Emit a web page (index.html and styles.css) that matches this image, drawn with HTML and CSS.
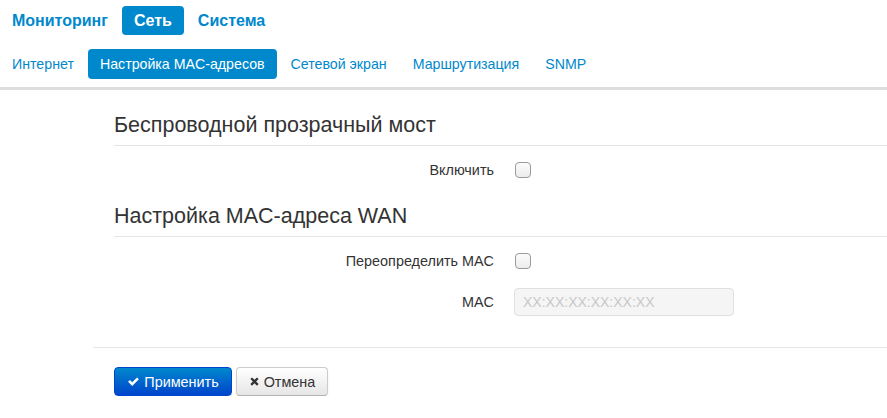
FILE: index.html
```html
<!DOCTYPE html>
<html lang="ru">
<head>
<meta charset="utf-8">
<link rel="stylesheet" href="styles.css">
</head>
<body>
<ul class="nav nav-top">
  <li><a>Мониторинг</a></li>
  <li class="active"><a>Сеть</a></li>
  <li><a>Система</a></li>
</ul>
<ul class="nav nav-sub">
  <li><a>Интернет</a></li>
  <li class="active"><a>Настройка MAC-адресов</a></li>
  <li><a>Сетевой экран</a></li>
  <li><a>Маршрутизация</a></li>
  <li><a>SNMP</a></li>
</ul>
<div class="bar"></div>
<div class="content">
  <div class="inner">
    <h2 class="legend first">Беспроводной прозрачный мост</h2>
    <div class="row row-a">
      <label class="lbl">Включить</label>
      <span class="check"></span>
    </div>
    <h2 class="legend second">Настройка MAC-адреса WAN</h2>
    <div class="row row-b">
      <label class="lbl">Переопределить MAC</label>
      <span class="check"></span>
    </div>
    <div class="row row-c">
      <label class="lbl">MAC</label>
      <input class="field" type="text" placeholder="XX:XX:XX:XX:XX:XX">
    </div>
  </div>
  <div class="actions">
    <button class="btn btn-primary"><svg class="ico" viewBox="0 0 14 14" width="13" height="13"><path d="M1.2 7.4 L3.2 5.4 L5.6 7.8 L10.8 2.6 L12.8 4.6 L5.6 11.8 Z" fill="#fff"/></svg>Применить</button>
    <button class="btn btn-default"><svg class="ico" viewBox="0 0 12 12" width="11" height="11"><path d="M1.5 3.3 L3.3 1.5 L6 4.2 L8.7 1.5 L10.5 3.3 L7.8 6 L10.5 8.7 L8.7 10.5 L6 7.8 L3.3 10.5 L1.5 8.7 L4.2 6 Z" fill="#333"/></svg>Отмена</button>
  </div>
</div>
</body>
</html>
```

FILE: styles.css
```css
* { box-sizing: border-box; }
body {
  margin: 0;
  font-family: "Liberation Sans", Arial, sans-serif;
  font-size: 14px;
  color: #333;
  background: #fff;
}
.nav {
  list-style: none;
  margin: 0;
  padding: 0;
  display: flex;
}
.nav li { margin-right: 2px; }
.nav a {
  display: block;
  padding: 8px 12px;
  line-height: 14px;
  color: #0088cc;
  border-radius: 4px;
}
.nav .active a {
  background: #0088cc;
  color: #fff;
}
.nav-top { margin-top: 6px; }
.nav-top a {
  font-weight: bold;
  font-size: 16px;
  line-height: 13px;
}
.nav-sub { margin-top: 14px; }
.nav-sub a { font-size: 14.2px; }
.bar {
  margin-top: 8px;
  height: 3px;
  background: #dddddd;
}
.content {
  margin-left: 93px;
}
.inner { padding-left: 21px; }
.legend {
  margin: 0;
  font-weight: normal;
  font-size: 21.5px;
  line-height: 40px;
  color: #333;
  border-bottom: 1px solid #e5e5e5;
}
.legend.first { margin-top: 15px; }
.legend.second { margin-top: 16px; }
.row {
  display: grid;
  grid-template-columns: 380px auto;
  column-gap: 20px;
  align-items: center;
  justify-content: start;
}
.row-a { margin-top: 14px; height: 20px; }
.row-b { margin-top: 14px; height: 20px; }
.row-c { margin-top: 17px; height: 28px; }
.lbl {
  text-align: right;
  line-height: 20px;
  font-size: 14.4px;
}
.check {
  display: block;
  width: 16px;
  height: 16px;
  border: 1px solid #9a9a9a;
  border-radius: 4px;
  background: linear-gradient(#fcfcfc, #ececec);
  margin-left: 1px;
}
.field {
  width: 220px;
  height: 28px;
  border: 1px solid #e0e0e0;
  border-radius: 4px;
  background: #f5f5f5;
  padding: 4px 8px;
  font-family: "Liberation Sans", Arial, sans-serif;
  font-size: 14px;
  color: #555;
}
.field::placeholder { color: #c8c8c8; }
.actions {
  margin-top: 31px;
  border-top: 1px solid #e5e5e5;
  padding: 19px 0 0 21px;
  display: flex;
  gap: 4px;
}
.btn {
  height: 29px;
  padding: 0 11px;
  font-family: "Liberation Sans", Arial, sans-serif;
  font-size: 14.4px;
  border-radius: 4px;
  display: inline-flex;
  align-items: center;
  gap: 4px;
  cursor: pointer;
}
.ico { display: block; }
.btn-primary {
  width: 118px;
  color: #fff;
  border: 1px solid #0044cc;
  background: linear-gradient(#0088cc, #0044cc);
  justify-content: center;
}
.btn-default {
  width: 92px;
  color: #333;
  border: 1px solid #cccccc;
  border-bottom-color: #b3b3b3;
  background: linear-gradient(#ffffff, #e6e6e6);
  box-shadow: 0 1px 2px rgba(0,0,0,0.08);
  justify-content: center;
}
```
